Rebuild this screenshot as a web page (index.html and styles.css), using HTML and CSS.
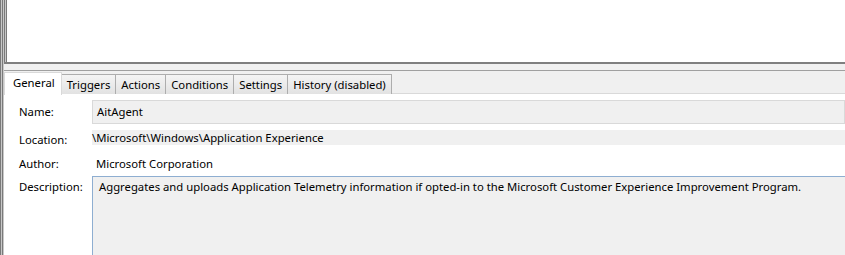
FILE: index.html
```html
<!DOCTYPE html>
<html>
<head>
<meta charset="utf-8">
<link rel="stylesheet" href="styles.css">
</head>
<body>
<div class="app">
  <div class="splitter"></div>
  <div class="main">
    <div class="list"></div>
    <div class="gap"></div>
    <div class="tabs">
      <div class="tab active">General</div>
      <div class="tab">Triggers</div>
      <div class="tab">Actions</div>
      <div class="tab">Conditions</div>
      <div class="tab">Settings</div>
      <div class="tab">History (disabled)</div>
      <div class="tab-fill"></div>
    </div>
    <div class="panel">
      <div class="row row-name">
        <div class="label">Name:</div>
        <div class="field boxed">AitAgent</div>
      </div>
      <div class="row row-loc">
        <div class="label">Location:</div>
        <div class="field shaded">\Microsoft\Windows\Application Experience</div>
      </div>
      <div class="row row-author">
        <div class="label">Author:</div>
        <div class="field plain">Microsoft Corporation</div>
      </div>
      <div class="row row-desc">
        <div class="label">Description:</div>
        <div class="field memo">Aggregates and uploads Application Telemetry information if opted-in to the Microsoft Customer Experience Improvement Program.</div>
      </div>
    </div>
  </div>
</div>
</body>
</html>
```

FILE: styles.css
```css
html, body {
  margin: 0;
  padding: 0;
  width: 845px;
  height: 255px;
  overflow: hidden;
  background: #ffffff;
  font-family: "Noto Sans", "Open Sans", sans-serif;
  font-size: 11.3px;
  color: #000;
}
.app {
  display: flex;
  height: 255px;
}
.splitter {
  width: 4px;
  flex: none;
  background: repeating-linear-gradient(90deg, #7a7a7a 0 1px, #c8c8c8 1px 2px);
}
.main {
  flex: 1;
  display: flex;
  flex-direction: column;
  min-width: 0;
}
.list {
  height: 62px;
  background: linear-gradient(90deg, #7a7a7a 0 1px, #c8c8c8 1px 2px, #7a7a7a 2px 3px, #ffffff 3px);
  border-bottom: 2px solid #7f7f7f;
}
.gap {
  height: 6px;
  background: #f0f0f0;
  border-bottom: 1px solid #a0a0a0;
}
.tabs {
  display: flex;
  align-items: flex-end;
  height: 23px;
  background: #f0f0f0;
}
.tab {
  height: 19px;
  line-height: 19px;
  padding: 0 5px;
  border: 1px solid #adadad;
  border-bottom: none;
  margin-left: -1px;
  background: linear-gradient(#f4f4f4, #e2e2e2);
  white-space: nowrap;
}
.tab.active {
  height: 22px;
  line-height: 20px;
  margin-left: 0;
  padding: 0 6px 0 8px;
  background: #fff;
  border-color: #d9d9d9;
  position: relative;
  z-index: 1;
  margin-bottom: -1px;
}
.tab-fill {
  flex: 1;
  border-bottom: 1px solid #d9d9d9;
}
.panel {
  flex: 1;
  background: #fff;
  padding: 6px 0 0 15px;
  display: flex;
  flex-direction: column;
}
.row {
  display: flex;
  align-items: flex-start;
}
.label {
  width: 73px;
  flex: none;
  line-height: 16px;
}
.field {
  flex: 1;
  white-space: nowrap;
}
.row-name .label { padding-top: 4px; }
.boxed {
  height: 22px;
  line-height: 22px;
  border: 1px solid #d9d9d9;
  background: #f0f0f0;
  padding-left: 4px;
}
.row-loc { margin-top: 6px; }
.row-loc .label { padding-top: 2px; }
.shaded {
  height: 15px;
  line-height: 15px;
  background: #f0f0f0;
}
.row-author { margin-top: 8px; }
.plain {
  line-height: 16px;
  padding-left: 4px;
}
.row-desc {
  margin-top: 4px;
  flex: 1;
}
.row-desc .label { padding-top: 3px; }
.memo {
  height: 100%;
  line-height: 16px;
  border: 1px solid #8eaed1;
  border-right: none;
  border-bottom: none;
  background: #f0f0f0;
  padding: 2px 0 0 6px;
}
```
